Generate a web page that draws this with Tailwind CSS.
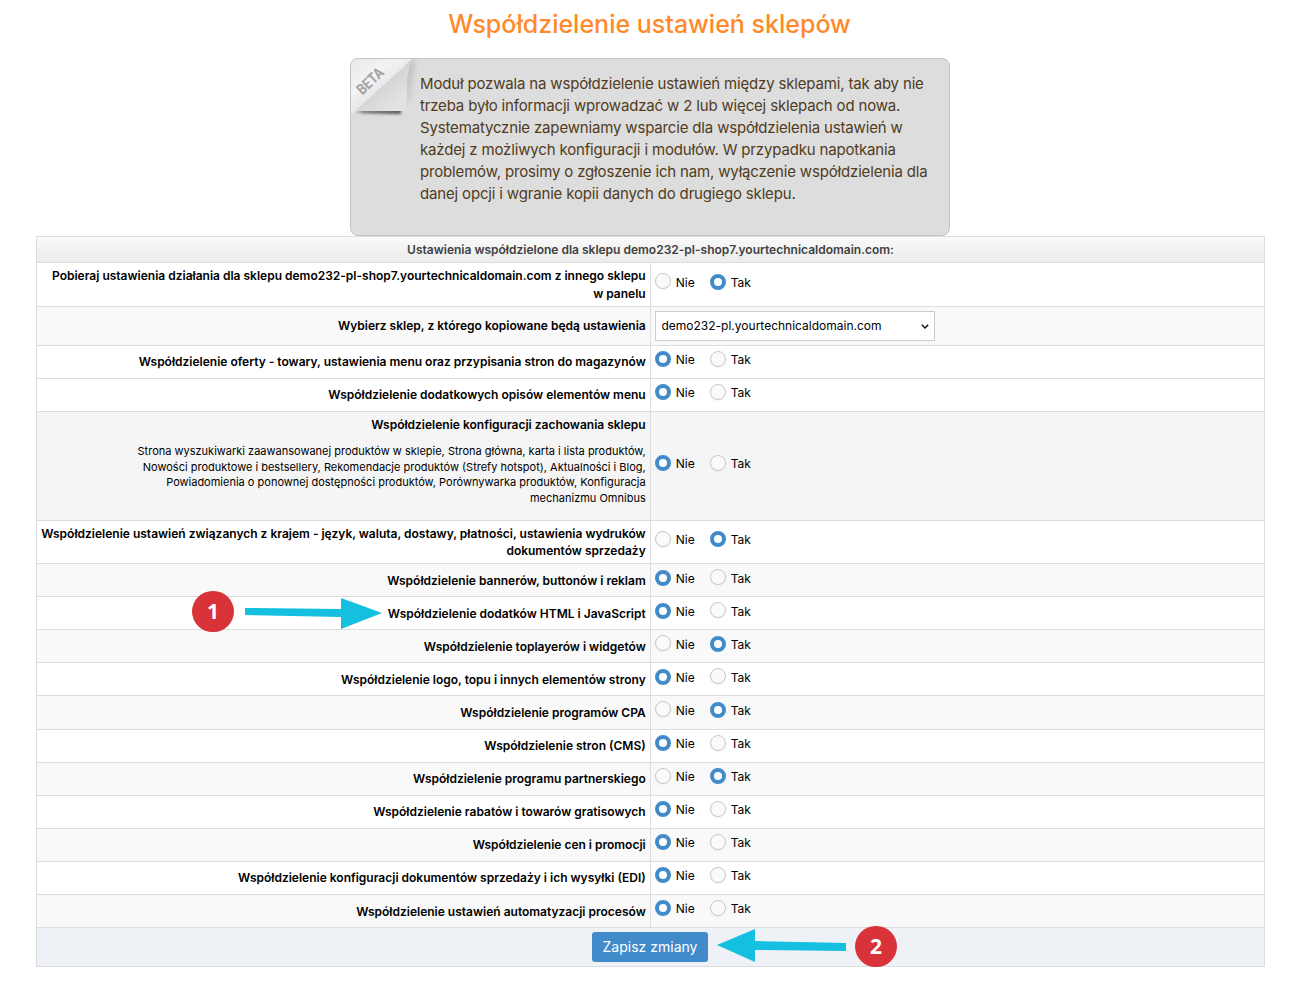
<!DOCTYPE html>
<html lang="pl">
<head>
    <meta charset="UTF-8">
    <meta name="viewport" content="width=device-width, initial-scale=1.0">
    <title>Współdzielenie ustawień sklepów</title>
    <script src="https://cdn.jsdelivr.net/npm/@tailwindcss/browser@4"></script>
</head>
<body class="relative bg-white font-['Inter',sans-serif] text-black overflow-hidden">
    <h1 class="h-[58px] pt-[6px] pr-[2px] text-center text-[25px] leading-9 font-medium text-[#ff8a2b]">Współdzielenie ustawień sklepów</h1>

    <!-- Beta notice -->
    <div class="relative w-[600px] h-[178px] ml-[350px] pl-[69px] pt-[14px] border border-[#c3c3c3] rounded-lg bg-[#dddddd] text-[15px] leading-[22px] tracking-[-0.165px] text-[#503c21] whitespace-nowrap">
        <svg class="absolute left-0 top-0 rounded-tl-[7px]" width="72" height="66" viewBox="0 0 72 66">
            <defs>
                <linearGradient id="fold" x1="0" y1="0" x2="0.5" y2="0.6">
                    <stop offset="0" stop-color="#e9e9e9"/>
                    <stop offset="0.6" stop-color="#f3f3f3"/>
                    <stop offset="1" stop-color="#e6e6e6"/>
                </linearGradient>
                <linearGradient id="back" x1="0.45" y1="0.45" x2="0.8" y2="0.8">
                    <stop offset="0" stop-color="#d3d3d3"/>
                    <stop offset="1" stop-color="#e2e2e2"/>
                </linearGradient>
                <filter id="soft" x="-20%" y="-50%" width="140%" height="200%"><feGaussianBlur stdDeviation="1.8"/></filter>
                <filter id="softer" x="-50%" y="-50%" width="200%" height="200%"><feGaussianBlur stdDeviation="3"/></filter>
            </defs>
            <path d="M54 2H64L58 40L54 45Z" fill="#999" opacity="0.4" filter="url(#softer)"/>
            <path d="M4 52L50 50L50 55L12 54Z" fill="#444" opacity="0.9" filter="url(#soft)"/>
            <path d="M2 52L59 3L56 20L55.500 52Z" fill="url(#back)"/>
            <path d="M0 0H61L0 56Z" fill="url(#fold)"/>
            <text transform="translate(11.500 36.500) rotate(-44)" font-family="Roboto" font-size="15" font-weight="700" letter-spacing="0" fill="#a2a2a2" textLength="31" lengthAdjust="spacingAndGlyphs">BETA</text>
        </svg>
        <p>Moduł pozwala na współdzielenie ustawień między sklepami, tak aby nie<br>
            trzeba było informacji wprowadzać w 2 lub więcej sklepach od nowa.<br>
            Systematycznie zapewniamy wsparcie dla współdzielenia ustawień w<br>
            każdej z możliwych konfiguracji i modułów. W przypadku napotkania<br>
            problemów, prosimy o zgłoszenie ich nam, wyłączenie współdzielenia dla<br>
            danej opcji i wgranie kopii danych do drugiego sklepu.</p>
    </div>

    <!-- Settings table -->
    <form class="w-[1229px] ml-9 border border-b-0 border-[#dddddd]">
        <div class="h-[26px] pt-[4px] border-b border-[#dddddd] bg-linear-to-b from-[#f9f9f9] to-[#ececec] text-center text-[12px] leading-[18px] font-semibold text-[#404040]">Ustawienia współdzielone dla sklepu demo232-pl-shop7.yourtechnicaldomain.com:</div>
        <div id="rows"></div>
        <div class="h-[39px] flex justify-center pt-[4px] pr-[2px] border-b border-[#dddddd] bg-[#eef2f7]">
            <button type="button" class="w-[116px] h-[30px] pb-[1px] pl-[1px] rounded-[3px] bg-[#428bca] text-white text-[14px]">Zapisz zmiany</button>
        </div>
    </form>

    <!-- Step 1 marker -->
    <div class="absolute left-[192px] top-[591px] w-[42px] h-[41px] rounded-full bg-[#d9333a] text-center text-[21px] leading-[41px] font-bold text-white font-['Open_Sans',sans-serif]">1</div>
    <svg class="absolute left-[244px] top-[597px]" width="140" height="34" viewBox="0 0 140 34">
        <path d="M1 11L97 12V1L138 16L97 32V20L1 18Z" fill="#14bfe0"/>
    </svg>

    <!-- Step 2 marker -->
    <div class="absolute left-[855px] top-[926px] w-[42px] h-[41px] rounded-full bg-[#d9333a] text-center text-[21px] leading-[41px] font-bold text-white font-['Open_Sans',sans-serif]">2</div>
    <svg class="absolute left-[716px] top-[928px]" width="132" height="36" viewBox="0 0 132 36">
        <path d="M1 17L39 1V13L130 15V23L39 22V34Z" fill="#14bfe0"/>
    </svg>

    <script>
        // h: row height, y: offset of the Nie/Tak line
        // up: empty radio sits 1px higher, low: label sits 1px lower
        const rows = [
            { label: 'Pobieraj ustawienia działania dla sklepu demo232-pl-shop7.yourtechnicaldomain.com z innego sklepu<br>w panelu', h: 44, y: 10, on: 1, up: 1, bg: 'bg-white' },
            { label: 'Wybierz sklep, z którego kopiowane będą ustawienia', h: 39, select: 'demo232-pl.yourtechnicaldomain.com', bg: 'bg-[#f9f9f9]' },
            { label: 'Współdzielenie oferty - towary, ustawienia menu oraz przypisania stron do magazynów', h: 33, y: 4, on: 0, bg: 'bg-white' },
            { label: 'Współdzielenie dodatkowych opisów elementów menu', h: 33, y: 4, on: 0, bg: 'bg-white' },
            { label: 'Współdzielenie konfiguracji zachowania sklepu', h: 109, y: 42, on: 0, bg: 'bg-[#f5f5f5]',
              note: 'Strona wyszukiwarki zaawansowanej produktów w sklepie, Strona główna, karta i lista produktów,<br>Nowości produktowe i bestsellery, Rekomendacje produktów (Strefy hotspot), Aktualności i Blog,<br>Powiadomienia o ponownej dostępności produktów, Porównywarka produktów, Konfiguracja<br>mechanizmu Omnibus' },
            { label: 'Współdzielenie ustawień związanych z krajem - język, waluta, dostawy, płatności, ustawienia wydruków<br>dokumentów sprzedaży', h: 43, y: 9, on: 1, bg: 'bg-white' },
            { label: 'Współdzielenie bannerów, buttonów i reklam', h: 33, y: 5, on: 0, up: 1, low: 1, bg: 'bg-[#f9f9f9]' },
            { label: 'Współdzielenie dodatków HTML i JavaScript', h: 33, y: 5, on: 0, up: 1, low: 1, bg: 'bg-white' },
            { label: 'Współdzielenie toplayerów i widgetów', h: 33, y: 5, on: 1, up: 1, low: 1, bg: 'bg-[#f9f9f9]' },
            { label: 'Współdzielenie logo, topu i innych elementów strony', h: 33, y: 5, on: 0, up: 1, low: 1, bg: 'bg-white' },
            { label: 'Współdzielenie programów CPA', h: 34, y: 5, on: 1, up: 1, bg: 'bg-[#f9f9f9]' },
            { label: 'Współdzielenie stron (CMS)', h: 33, y: 4, on: 0, bg: 'bg-white' },
            { label: 'Współdzielenie programu partnerskiego', h: 33, y: 4, on: 1, bg: 'bg-[#f9f9f9]' },
            { label: 'Współdzielenie rabatów i towarów gratisowych', h: 33, y: 4, on: 0, bg: 'bg-white' },
            { label: 'Współdzielenie cen i promocji', h: 33, y: 4, on: 0, bg: 'bg-[#f9f9f9]' },
            { label: 'Współdzielenie konfiguracji dokumentów sprzedaży i ich wysyłki (EDI)', h: 33, y: 4, on: 0, bg: 'bg-white' },
            { label: 'Współdzielenie ustawień automatyzacji procesów', h: 33, y: 4, on: 0, low: 1, bg: 'bg-[#f9f9f9]' }
        ];

        const dotOn = 'appearance-none size-4 shrink-0 rounded-full border-4 border-[#428bca] bg-white';
        const dotOff = 'appearance-none size-4 shrink-0 rounded-full border border-[#c8c8c8] bg-[#fafafa] shadow-[0_1px_2px_rgba(0,0,0,0.05)]';

        function radio(row, index, value, text, width) {
            const on = row.on === value;
            const shift = !on && row.up ? 'mb-[2px]' : '';
            return `<label class="${width} h-[18px] flex items-center gap-[4.7px] leading-[18px]">
                <input type="radio" name="opt${index}" ${on ? 'checked' : ''} class="${on ? dotOn : dotOff} ${shift}"><span class="pt-[1px]">${text}</span>
            </label>`;
        }

        function control(row, i) {
            if (row.select) {
                return `<div class="mt-[4px] w-[280px] h-[30px] flex items-center justify-between border border-[#cccccc] bg-white pl-[5.5px] pr-[4.5px]">
                    <span>${row.select}</span>
                    <svg width="9" height="7" viewBox="0 0 9 7"><path d="M0.800 1.800L4 5L7.200 1.800" fill="none" stroke="#111" stroke-width="1.5"/></svg>
                </div>`;
            }
            return `<div class="flex" style="padding-top:${row.y}px">
                ${radio(row, i, 0, 'Nie', 'w-[55px]')}${radio(row, i, 1, 'Tak', 'w-[50px]')}
            </div>`;
        }

        document.getElementById('rows').innerHTML = rows.map((row, i) => `
            <div class="flex border-b border-[#dddddd] text-[12px] ${row.bg}" style="height:${row.h}px">
                <div class="w-[613px] shrink-0 flex flex-col ${row.note ? 'pt-[4px]' : 'justify-center'} ${row.low ? 'pt-[2px]' : ''} pr-[4.3px] text-right leading-[17.5px] whitespace-nowrap">
                    <p class="font-semibold">${row.label}</p>
                    ${row.note ? `<p class="mt-[10.3px] text-[11px] leading-[15.7px]">${row.note}</p>` : ''}
                </div>
                <div class="grow border-l border-[#dddddd] pl-[4px]">${control(row, i)}</div>
            </div>`).join('');
    </script>
</body>
</html>
